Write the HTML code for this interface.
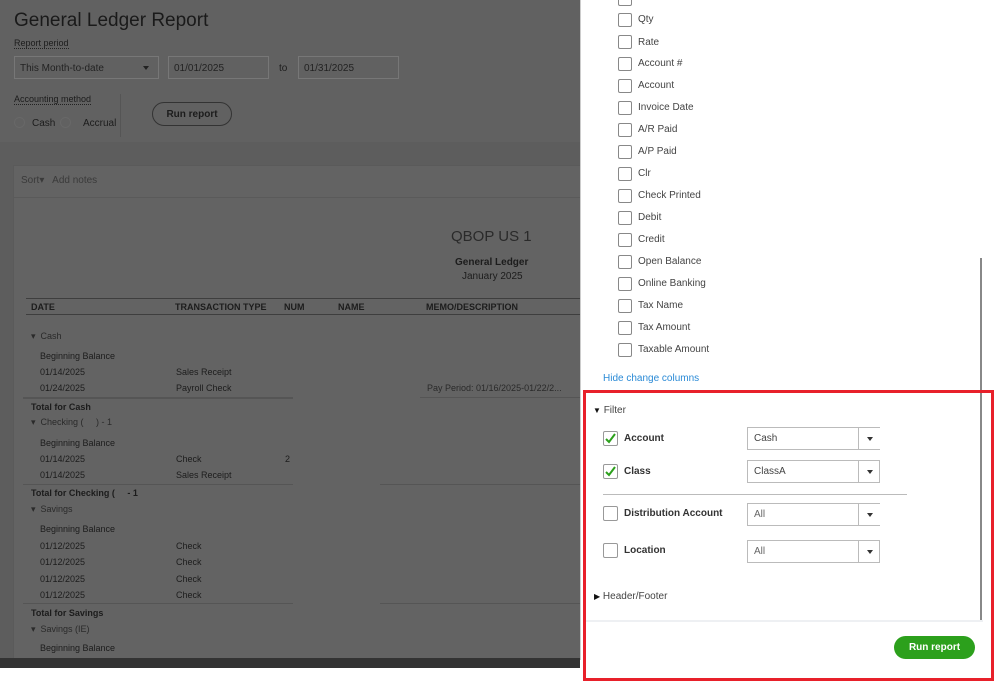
<!DOCTYPE html>
<html><head><meta charset="utf-8"><style>
*{margin:0;padding:0;box-sizing:border-box}
body{width:999px;height:686px;overflow:hidden;position:relative;background:#fff;font-family:"Liberation Sans",sans-serif}
.a{position:absolute;white-space:nowrap}
#left{position:absolute;left:0;top:0;width:580px;height:658px;background:#5d5d5d;overflow:hidden}
.t{color:#1c1c1c;font-size:10px}
.b{font-weight:bold}
.inp{position:absolute;border:1px solid #777;background:#616161;height:23px;font-size:10px;color:#222;padding:6px 5px}
.cb{position:absolute;left:618px;width:14px;height:14px;border:1px solid #888;border-radius:2px;background:#fff}
.lb{position:absolute;left:638px;font-size:10px;color:#444}
.sel{position:absolute;left:747px;width:133px;height:23px;border:1px solid #bbb;border-right:none;font-size:10px;color:#444;padding:5px 6px}
.sel:after{content:"";position:absolute;left:110px;top:-1px;height:23px;border-left:1px solid #bbb}
.sel i{position:absolute;left:119px;top:9px;border-left:3px solid transparent;border-right:3px solid transparent;border-top:4px solid #333}
.sel.r{border-right:1px solid #bbb}
.fc{position:absolute;left:603px;width:15px;height:15px;border:1px solid #999;border-radius:2px}
.fl{position:absolute;left:624px;font-size:10px;font-weight:bold;color:#333}
</style></head><body>
<div id="left">
 <div class="a" style="left:0;top:0;width:580px;height:142px;background:#616161"></div>
 <div class="a" style="left:14px;top:10px;font-size:19px;color:#1a1a1a">General Ledger Report</div>
 <div class="a t" style="left:14px;top:38px;font-size:9px;border-bottom:1px dotted #222">Report period</div>
 <div class="inp" style="left:14px;top:56px;width:145px">This Month-to-date<span style="position:absolute;right:9px;top:9px;border-left:3px solid transparent;border-right:3px solid transparent;border-top:4px solid #222"></span></div>
 <div class="inp" style="left:168px;top:56px;width:101px">01/01/2025</div>
 <div class="a t" style="left:279px;top:63px">to</div>
 <div class="inp" style="left:298px;top:56px;width:101px">01/31/2025</div>
 <div class="a t" style="left:14px;top:94px;font-size:9px;border-bottom:1px dotted #222">Accounting method</div>
 <div class="a" style="left:14px;top:117px;width:11px;height:11px;border-radius:50%;border:1px solid #686868"></div>
 <div class="a t" style="left:32px;top:118px">Cash</div>
 <div class="a" style="left:60px;top:117px;width:11px;height:11px;border-radius:50%;border:1px solid #686868"></div>
 <div class="a t" style="left:83px;top:118px">Accrual</div>
 <div class="a" style="left:120px;top:94px;width:1px;height:43px;background:#555"></div>
 <div class="a t b" style="left:152px;top:102px;width:80px;height:24px;border:1px solid #333;border-radius:12px;text-align:center;padding-top:6px;font-size:10px">Run report</div>
 <div class="a" style="left:13px;top:165px;width:580px;height:500px;background:#636363;border:1px solid #5a5a5a"></div>
 <div class="a" style="left:13px;top:197px;width:580px;height:1px;background:#5a5a5a"></div>
 <div class="a" style="left:21px;top:175px;font-size:10px;color:#3a3a3a">Sort▾ &nbsp; Add notes</div>
 <div class="a" style="left:451px;top:228px;font-size:15px;color:#2a2a2a">QBOP US 1</div>
 <div class="a t b" style="left:455px;top:257px">General Ledger</div>
 <div class="a t" style="left:462px;top:271px">January 2025</div>
 <div class="a" style="left:26px;top:298px;width:560px;height:17px;border-top:1px solid #3e3e3e;border-bottom:1px solid #3e3e3e"></div>
 <div class="a t b" style="left:31px;top:302px;font-size:9px">DATE</div>
 <div class="a t b" style="left:175px;top:302px;font-size:9px">TRANSACTION TYPE</div>
 <div class="a t b" style="left:284px;top:302px;font-size:9px">NUM</div>
 <div class="a t b" style="left:338px;top:302px;font-size:9px">NAME</div>
 <div class="a t b" style="left:426px;top:302px;font-size:9px">MEMO/DESCRIPTION</div>
 <div class="a t" style="left:31px;top:331px;font-size:9px;color:#2a2a2a">▾ &nbsp;Cash</div>
 <div class="a t" style="left:40px;top:351px;font-size:9px">Beginning Balance</div>
 <div class="a t" style="left:40px;top:367px;font-size:9px">01/14/2025</div><div class="a t" style="left:176px;top:367px;font-size:9px">Sales Receipt</div>
 <div class="a t" style="left:40px;top:383px;font-size:9px">01/24/2025</div><div class="a t" style="left:176px;top:383px;font-size:9px">Payroll Check</div>
 <div class="a t" style="left:427px;top:383px;font-size:9px;color:#2a2a2a">Pay Period: 01/16/2025-01/22/2...</div>
 <div class="a" style="left:23px;top:397px;width:270px;height:2px;background:#555"></div>
 <div class="a" style="left:420px;top:397px;width:160px;height:1px;background:#555"></div>
 <div class="a t b" style="left:31px;top:402px;font-size:9px">Total for Cash</div>
 <div class="a t" style="left:31px;top:417px;font-size:9px;color:#2a2a2a">▾ &nbsp;Checking ( &nbsp; &nbsp; ) - 1</div>
 <div class="a t" style="left:40px;top:438px;font-size:9px">Beginning Balance</div>
 <div class="a t" style="left:40px;top:454px;font-size:9px">01/14/2025</div><div class="a t" style="left:176px;top:454px;font-size:9px">Check</div><div class="a t" style="left:285px;top:454px;font-size:9px">2</div>
 <div class="a t" style="left:40px;top:470px;font-size:9px">01/14/2025</div><div class="a t" style="left:176px;top:470px;font-size:9px">Sales Receipt</div>
 <div class="a" style="left:23px;top:484px;width:270px;height:1px;background:#555"></div>
 <div class="a" style="left:380px;top:484px;width:200px;height:1px;background:#555"></div>
 <div class="a t b" style="left:31px;top:488px;font-size:9px">Total for Checking ( &nbsp; &nbsp; - 1</div>
 <div class="a t" style="left:31px;top:504px;font-size:9px;color:#2a2a2a">▾ &nbsp;Savings</div>
 <div class="a t" style="left:40px;top:524px;font-size:9px">Beginning Balance</div>
 <div class="a t" style="left:40px;top:541px;font-size:9px">01/12/2025</div><div class="a t" style="left:176px;top:541px;font-size:9px">Check</div>
 <div class="a t" style="left:40px;top:557px;font-size:9px">01/12/2025</div><div class="a t" style="left:176px;top:557px;font-size:9px">Check</div>
 <div class="a t" style="left:40px;top:574px;font-size:9px">01/12/2025</div><div class="a t" style="left:176px;top:574px;font-size:9px">Check</div>
 <div class="a t" style="left:40px;top:590px;font-size:9px">01/12/2025</div><div class="a t" style="left:176px;top:590px;font-size:9px">Check</div>
 <div class="a" style="left:23px;top:603px;width:270px;height:1px;background:#555"></div>
 <div class="a" style="left:380px;top:603px;width:200px;height:1px;background:#555"></div>
 <div class="a t b" style="left:31px;top:608px;font-size:9px">Total for Savings</div>
 <div class="a t" style="left:31px;top:624px;font-size:9px;color:#2a2a2a">▾ &nbsp;Savings (IE)</div>
 <div class="a t" style="left:40px;top:643px;font-size:9px">Beginning Balance</div>
</div>
<div class="a" style="left:0;top:658px;width:580px;height:10px;background:#333"></div>
<div class="a" style="left:580px;top:0;width:419px;height:686px;background:#fff"></div>
<div class="a" style="left:580px;top:0;width:1px;height:660px;background:#ccc"></div>
<div class="a" style="left:980px;top:258px;width:2px;height:362px;background:#888"></div>
<div class="cb" style="top:-8px"></div>
<div class="cb" style="top:13px"></div><div class="lb" style="top:14px">Qty</div>
<div class="cb" style="top:35px"></div><div class="lb" style="top:37px">Rate</div>
<div class="cb" style="top:57px"></div><div class="lb" style="top:58px">Account #</div>
<div class="cb" style="top:79px"></div><div class="lb" style="top:80px">Account</div>
<div class="cb" style="top:101px"></div><div class="lb" style="top:102px">Invoice Date</div>
<div class="cb" style="top:123px"></div><div class="lb" style="top:124px">A/R Paid</div>
<div class="cb" style="top:145px"></div><div class="lb" style="top:146px">A/P Paid</div>
<div class="cb" style="top:167px"></div><div class="lb" style="top:168px">Clr</div>
<div class="cb" style="top:189px"></div><div class="lb" style="top:190px">Check Printed</div>
<div class="cb" style="top:211px"></div><div class="lb" style="top:212px">Debit</div>
<div class="cb" style="top:233px"></div><div class="lb" style="top:234px">Credit</div>
<div class="cb" style="top:255px"></div><div class="lb" style="top:256px">Open Balance</div>
<div class="cb" style="top:277px"></div><div class="lb" style="top:278px">Online Banking</div>
<div class="cb" style="top:299px"></div><div class="lb" style="top:300px">Tax Name</div>
<div class="cb" style="top:321px"></div><div class="lb" style="top:322px">Tax Amount</div>
<div class="cb" style="top:343px"></div><div class="lb" style="top:344px">Taxable Amount</div>
<div class="a" style="left:603px;top:373px;font-size:10px;color:#2a8ad6">Hide change columns</div>
<div class="a" style="left:593px;top:405px;font-size:10px;color:#444"><span style="font-size:8px;color:#111">▼</span> Filter</div>
<div class="fc" style="top:431px"><svg width="13" height="13" style="position:absolute;left:0;top:0"><path d="M2 7 L5 10 L11 2" stroke="#2ca01c" stroke-width="2" fill="none"/></svg></div>
<div class="fl" style="top:433px">Account</div>
<div class="sel" style="top:427px">Cash<i></i></div>
<div class="fc" style="top:464px"><svg width="13" height="13" style="position:absolute;left:0;top:0"><path d="M2 7 L5 10 L11 2" stroke="#2ca01c" stroke-width="2" fill="none"/></svg></div>
<div class="fl" style="top:466px">Class</div>
<div class="sel r" style="top:460px">ClassA<i></i></div>
<div class="a" style="left:603px;top:494px;width:304px;height:1px;background:#bbb"></div>
<div class="fc" style="top:506px"></div>
<div class="fl" style="top:508px">Distribution Account</div>
<div class="sel" style="top:503px;color:#666">All<i></i></div>
<div class="fc" style="top:543px"></div>
<div class="fl" style="top:545px">Location</div>
<div class="sel r" style="top:540px;color:#666">All<i></i></div>
<div class="a" style="left:594px;top:591px;font-size:10px;color:#444"><span style="font-size:8px;color:#111">▶</span> Header/Footer</div>
<div class="a" style="left:586px;top:620px;width:397px;height:2px;background:#eef0f3"></div>
<div class="a" style="left:894px;top:636px;width:81px;height:23px;border-radius:12px;background:#2ca01c;color:#fff;font-size:10px;font-weight:bold;text-align:center;padding-top:6px">Run report</div>
<div class="a" style="left:583px;top:390px;width:411px;height:291px;border:3px solid #e8202a"></div>
</body></html>
